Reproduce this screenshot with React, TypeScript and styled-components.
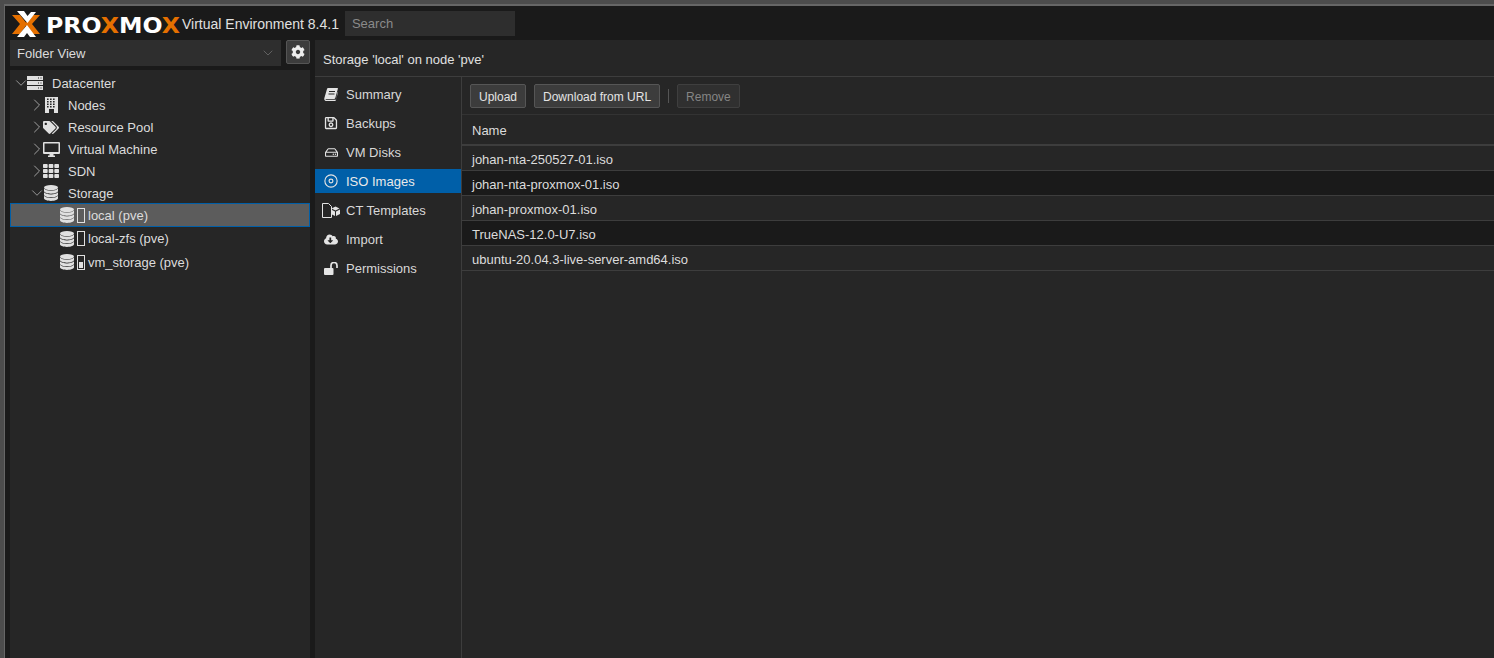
import React from 'react'
import styled, { createGlobalStyle } from 'styled-components'
import { ChevronDown, ChevronRight } from 'lucide-react'
import { FaCloudDownloadAlt, FaCog, FaRegHdd, FaRegSave, FaTags, FaTh } from 'react-icons/fa'

const GlobalStyle = createGlobalStyle`
  html, body {
    margin: 0;
    height: 100%;
    overflow: hidden;
    background: #4c4c4c;
  }
  #root {
    height: 658px;
    font-family: "Liberation Sans", Arial, sans-serif;
    font-size: 13px;
    color: #f2f2f2;
  }
`

const Page = styled.div`
  height: 658px;
  box-sizing: border-box;
  padding: 4px 0 0 4px;
`

const Frame = styled.div`
  height: 100%;
  box-sizing: border-box;
  border-top: 2px solid #666;
  border-left: 1px solid #666;
  background: #1a1a1a;
  display: flex;
  flex-direction: column;
`

const Header = styled.header`
  height: 34px;
  flex: none;
  box-sizing: border-box;
  padding: 1px 0 0 7px;
  display: flex;
  align-items: center;
`

const LogoWrap = styled.svg`
  width: 170px;
  height: 26px;
  flex: none;
`

const Version = styled.span`
  font-size: 14px;
  color: #e0e0e0;
  white-space: nowrap;
`

const SearchBox = styled.div`
  margin-left: 6px;
  width: 170px;
  height: 25px;
  box-sizing: border-box;
  padding-left: 7px;
  background: #2e2e2e;
  color: #8a8a8a;
  line-height: 26px;
`

const Body = styled.div`
  flex: 1;
  min-height: 0;
  display: flex;
`

const Sidebar = styled.aside`
  width: 310px;
  flex: none;
  padding: 0 5px;
  box-sizing: border-box;
  display: flex;
  flex-direction: column;
`

const ViewRow = styled.div`
  height: 26px;
  flex: none;
  display: flex;
  gap: 5px;
`

const ViewSelect = styled.div`
  width: 271px;
  box-sizing: border-box;
  padding: 0 5px 0 7px;
  background: #2e2e2e;
  color: #dcdcdc;
  display: flex;
  align-items: center;
  justify-content: space-between;
`

const GearButton = styled.div`
  width: 24px;
  height: 24px;
  box-sizing: border-box;
  border: 1px solid #555;
  border-radius: 2px;
  background: #3c3c3c;
  color: #eee;
  display: flex;
  align-items: center;
  justify-content: center;
`

const Tree = styled.div`
  flex: 1;
  margin-top: 4px;
  padding-top: 2px;
  background: #262626;
`

const TreeRow = styled.div<{ $indent: number; $height?: number; $selected?: boolean }>`
  height: ${(p) => p.$height ?? 22}px;
  box-sizing: border-box;
  padding-left: ${(p) => p.$indent}px;
  display: flex;
  align-items: center;
  color: #dcdcdc;
  background: ${(p) => (p.$selected ? '#5c5c5c' : 'transparent')};
  outline: ${(p) => (p.$selected ? '1px solid #005fa8' : 'none')};
  outline-offset: -1px;
`

const StorageGroupRow = styled(TreeRow)`
  padding-top: 1px;
`

const Expander = styled.span`
  width: 12px;
  flex: none;
  display: flex;
  justify-content: center;
  color: #a0a0a0;

  svg {
    flex: none;
  }
`

const TreeIcon = styled.span`
  width: 25px;
  flex: none;
  display: flex;
  align-items: center;
  color: #e0e0e0;
`

const IconSlot = styled.span`
  width: 16px;
  flex: none;
  display: flex;
  justify-content: center;
`

const LeafIcon = styled.span`
  width: 28px;
  flex: none;
  display: flex;
  align-items: center;
  gap: 3px;
  color: #e0e0e0;
`

const Gauge = styled.span`
  width: 8px;
  height: 15px;
  flex: none;
  box-sizing: border-box;
  border: 1px solid #e0e0e0;
  padding: 1px;
  display: flex;
  align-items: flex-end;
`

const GaugeFill = styled.span`
  width: 100%;
  background: #e0e0e0;
`

const Glyph = styled.svg`
  flex: none;
  fill: currentColor;
`

const Content = styled.main`
  flex: 1;
  min-width: 0;
  background: #262626;
  display: flex;
  flex-direction: column;
`

const PanelTitle = styled.div`
  height: 37px;
  flex: none;
  box-sizing: border-box;
  padding: 2px 0 0 8px;
  border-bottom: 1px solid #3d3d3d;
  display: flex;
  align-items: center;
  color: #e0e0e0;
`

const Split = styled.div`
  flex: 1;
  display: flex;
  min-height: 0;
`

const SideNav = styled.nav`
  width: 147px;
  flex: none;
  box-sizing: border-box;
  padding-top: 5px;
  border-right: 1px solid #3d3d3d;
`

const NavItem = styled.div<{ $active?: boolean }>`
  height: 24px;
  margin-bottom: 5px;
  padding-left: 9px;
  display: flex;
  align-items: center;
  gap: 8px;
  color: ${(p) => (p.$active ? '#eaeaea' : '#d8d8d8')};
  background: ${(p) => (p.$active ? '#005fa8' : 'transparent')};
`

const NavIcon = styled.span`
  width: 14px;
  flex: none;
  display: flex;
  justify-content: center;
  color: #e4e4e4;
`

const FilePanel = styled.section`
  flex: 1;
  min-width: 0;
`

const Toolbar = styled.div`
  height: 38px;
  box-sizing: border-box;
  padding: 1px 0 0 8px;
  border-bottom: 1px solid #333;
  display: flex;
  align-items: center;
  gap: 8px;
`

const Button = styled.div<{ $disabled?: boolean }>`
  height: 24px;
  box-sizing: border-box;
  padding: 2px 8px 0;
  border: 1px solid ${(p) => (p.$disabled ? '#3f3f3f' : '#565656')};
  border-radius: 2px;
  background: ${(p) => (p.$disabled ? '#303030' : '#3c3c3c')};
  color: ${(p) => (p.$disabled ? '#858585' : '#e4e4e4')};
  font-size: 12px;
  display: flex;
  align-items: center;
`

const ToolbarSep = styled.span`
  width: 1px;
  height: 14px;
  background: #555;
`

const GridHead = styled.div`
  height: 31px;
  box-sizing: border-box;
  padding: 1px 0 0 10px;
  border-bottom: 2px solid #3d3d3d;
  display: flex;
  align-items: center;
  color: #dcdcdc;
`

const FileRow = styled.div<{ $odd?: boolean }>`
  height: 25px;
  box-sizing: border-box;
  padding: 3px 0 0 10px;
  border-bottom: 1px solid #3d3d3d;
  display: flex;
  align-items: center;
  color: #dcdcdc;
  background: ${(p) => (p.$odd ? '#1a1a1a' : '#262626')};
`

const Logo = () => (
  <LogoWrap viewBox="0 0 170 26">
    <path d="M0 4h8l7 9-7 10H0l8-10z" fill="#e57000" />
    <path d="M28 4h-8l-7 9 7 10h8l-8-10z" fill="#e57000" />
    <path d="M5 0h7l3.5 5L19 1h5l-8.500 11z" fill="#fff" />
    <path d="M5 26h7l3-4 3 4h6l-9-12z" fill="#fff" />
    <text
      x="34"
      y="22"
      fontFamily="'DejaVu Sans', sans-serif"
      fontWeight="700"
      fontSize="21"
      fill="#fff"
      textLength="134"
      lengthAdjust="spacingAndGlyphs"
    >
      PRO<tspan fill="#e57000">X</tspan>MO<tspan fill="#e57000">X</tspan>
    </text>
  </LogoWrap>
)

const DatabaseIcon = () => (
  <Glyph width="14" height="16" viewBox="0 0 14 16">
    <ellipse cx="7" cy="2.600" rx="7" ry="2.600" />
    {[3.6, 7.2, 10.8].map((y) => (
      <path key={y} d={`M0 ${y}v2.500c0 1.500 3.100 2.600 7 2.600s7-1.100 7-2.600v-2.500c-1.300 1.400-4 2.200-7 2.200s-5.700-.8-7-2.200z`} />
    ))}
  </Glyph>
)

const ServerIcon = () => (
  <Glyph width="16" height="14" viewBox="0 0 16 14" fillRule="evenodd">
    {[0, 5, 10].map((y) => (
      <path key={y} d={`M0 ${y}h16v4H0zM11 ${y + 1.500}v1h1v-1zM13.500 ${y + 1.500}v1h1v-1z`} />
    ))}
  </Glyph>
)

const BuildingIcon = () => (
  <Glyph width="13" height="16" viewBox="0 0 13 16" fillRule="evenodd">
    <path d="M0 0h13v16H0z" />
    {[2, 5, 8].flatMap((x) =>
      [1.500, 4, 6.500, 9].map((y) => <rect key={`${x}-${y}`} x={x} y={y} width="1.600" height="1.500" fill="#262626" />),
    )}
    <rect x="4" y="12" width="5" height="4" fill="#262626" />
  </Glyph>
)

const DesktopIcon = () => (
  <Glyph width="17" height="15" viewBox="0 0 17 15" fillRule="evenodd">
    <path d="M1 0h15a1 1 0 0 1 1 1v10a1 1 0 0 1-1 1H1a1 1 0 0 1-1-1V1a1 1 0 0 1 1-1zM1.500 1.500v8.500h14V1.500z" />
    <path d="M6.500 12h4v1.500h1.500V15H5v-1.500h1.500z" />
  </Glyph>
)

const BookIcon = () => (
  <Glyph width="14" height="13" viewBox="0 0 14 13" fillRule="evenodd">
    <path d="M4 0h9.500c.4 0 .5.300.4.700L11.300 10c-.2.700-.6 1-1.300 1H2.200c-.6 0-.9.700 0 .8h9c.4 0 .8-.2.900-.6l1.500-7.200.4.300-2.100 8c-.1.400-.5.700-1 .7H2C.7 13 0 11.500.3 10.300L3 1c.2-.6.500-1 1-1zM5 3v1h6V3zM4.500 5.500v1h6v-1z" />
  </Glyph>
)

const DiscIcon = () => (
  <svg width="16" height="16" viewBox="0 0 16 16" fill="none" stroke="currentColor" strokeWidth="1.300">
    <circle cx="8" cy="8" r="7" />
    <circle cx="8" cy="8" r="2.200" />
  </svg>
)

const TemplateIcon = () => (
  <Glyph width="18" height="15" viewBox="0 0 18 15">
    <path d="M.5.500h6l3 3V14.500H.5z" fill="none" stroke="currentColor" />
    <path d="M13.500 3.500l4 2-4 2-4-2z" />
    <path d="M9 6.500l4 2v4.500l-4-2zM18 6.500l-4 2v4.500l4-2z" />
  </Glyph>
)

const UnlockIcon = () => (
  <Glyph width="14" height="13" viewBox="0 0 14 13">
    <rect x="0" y="6" width="9.500" height="7" rx="1" />
    <path d="M7 6V3.500a3 3 0 0 1 6 0V6" fill="none" stroke="currentColor" strokeWidth="1.700" />
  </Glyph>
)

const treeTop = [
  { label: 'Nodes', icon: <BuildingIcon /> },
  { label: 'Resource Pool', icon: <FaTags size={17} /> },
  { label: 'Virtual Machine', icon: <DesktopIcon /> },
  { label: 'SDN', icon: <FaTh size={16} /> },
]

const storages = [
  { label: 'local (pve)', fill: 0, height: 24, selected: true },
  { label: 'local-zfs (pve)', fill: 0, height: 23 },
  { label: 'vm_storage (pve)', fill: 50, height: 24 },
]

const navItems = [
  { label: 'Summary', icon: <BookIcon /> },
  { label: 'Backups', icon: <FaRegSave size={14} /> },
  { label: 'VM Disks', icon: <FaRegHdd size={13} /> },
  { label: 'ISO Images', icon: <DiscIcon />, active: true },
  { label: 'CT Templates', icon: <TemplateIcon /> },
  { label: 'Import', icon: <FaCloudDownloadAlt size={15} /> },
  { label: 'Permissions', icon: <UnlockIcon /> },
]

const files = [
  'johan-nta-250527-01.iso',
  'johan-nta-proxmox-01.iso',
  'johan-proxmox-01.iso',
  'TrueNAS-12.0-U7.iso',
  'ubuntu-20.04.3-live-server-amd64.iso',
]

export default function App() {
  return (
    <Page>
      <GlobalStyle />
      <Frame>
        <Header>
          <Logo />
          <Version>Virtual Environment 8.4.1</Version>
          <SearchBox>Search</SearchBox>
        </Header>
        <Body>
          <Sidebar>
            <ViewRow>
              <ViewSelect>
                Folder View
                <ChevronDown size={16} strokeWidth={1.2} color="#6f6f6f" />
              </ViewSelect>
              <GearButton>
                <FaCog size={14} />
              </GearButton>
            </ViewRow>
            <Tree>
              <TreeRow $indent={5}>
                <Expander><ChevronDown size={18} strokeWidth={1.2} /></Expander>
                <TreeIcon><IconSlot><ServerIcon /></IconSlot></TreeIcon>
                Datacenter
              </TreeRow>
              {treeTop.map((t) => (
                <TreeRow $indent={21} key={t.label}>
                  <Expander><ChevronRight size={20} strokeWidth={1.2} /></Expander>
                  <TreeIcon><IconSlot>{t.icon}</IconSlot></TreeIcon>
                  {t.label}
                </TreeRow>
              ))}
              <StorageGroupRow $indent={21} $height={21}>
                <Expander><ChevronDown size={18} strokeWidth={1.2} /></Expander>
                <TreeIcon><IconSlot><DatabaseIcon /></IconSlot></TreeIcon>
                Storage
              </StorageGroupRow>
              {storages.map((s) => (
                <TreeRow $indent={50} $height={s.height} $selected={s.selected} key={s.label}>
                  <LeafIcon>
                    <DatabaseIcon />
                    <Gauge><GaugeFill style={{ height: `${s.fill}%` }} /></Gauge>
                  </LeafIcon>
                  {s.label}
                </TreeRow>
              ))}
            </Tree>
          </Sidebar>
          <Content>
            <PanelTitle>Storage 'local' on node 'pve'</PanelTitle>
            <Split>
              <SideNav>
                {navItems.map((n) => (
                  <NavItem $active={n.active} key={n.label}>
                    <NavIcon>{n.icon}</NavIcon>
                    {n.label}
                  </NavItem>
                ))}
              </SideNav>
              <FilePanel>
                <Toolbar>
                  <Button>Upload</Button>
                  <Button>Download from URL</Button>
                  <ToolbarSep />
                  <Button $disabled>Remove</Button>
                </Toolbar>
                <GridHead>Name</GridHead>
                {files.map((f, i) => (
                  <FileRow $odd={i % 2 === 1} key={f}>{f}</FileRow>
                ))}
              </FilePanel>
            </Split>
          </Content>
        </Body>
      </Frame>
    </Page>
  )
}
